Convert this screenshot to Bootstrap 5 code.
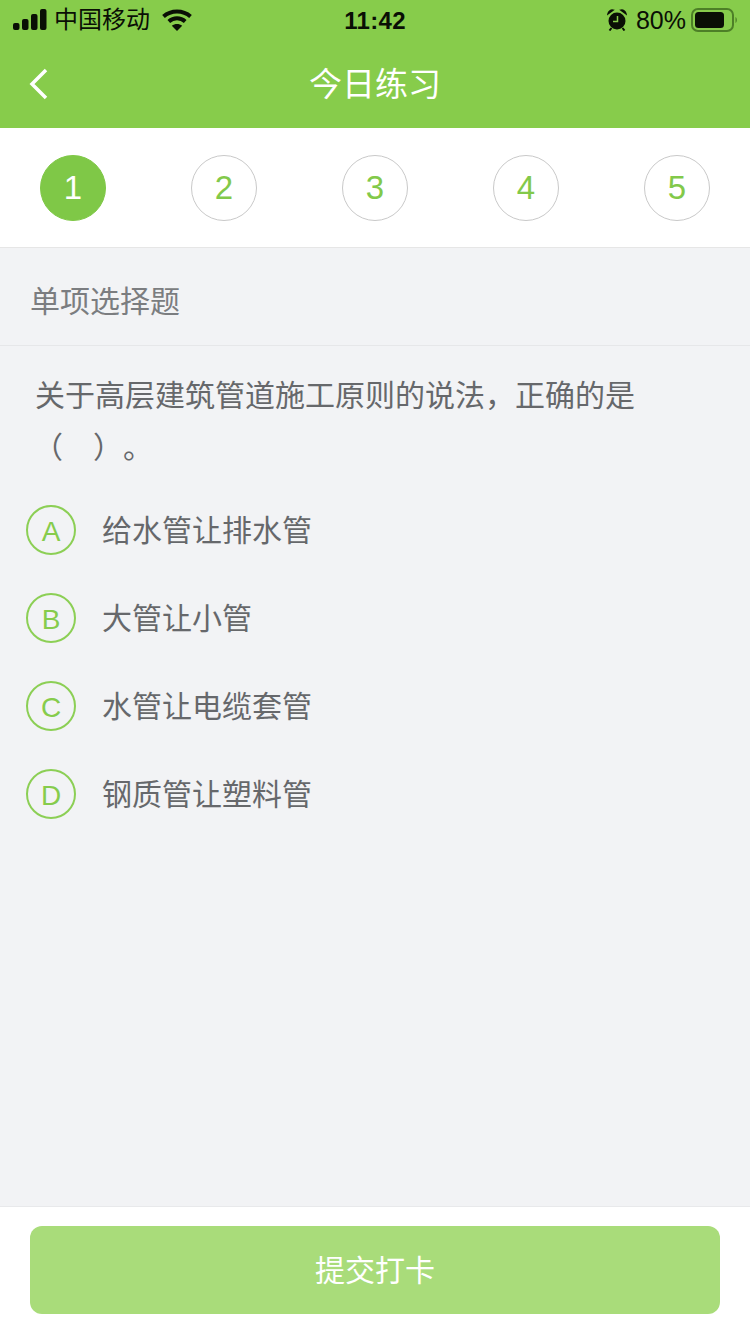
<!DOCTYPE html>
<html lang="zh">
<head>
<meta charset="utf-8">
<title>今日练习</title>
<link rel="stylesheet" href="https://cdn.jsdelivr.net/npm/bootstrap@5.3.0/dist/css/bootstrap.min.css">
<style>
html,body{margin:0;height:1334px;overflow:hidden}
body{font-family:"Liberation Sans","Noto Sans CJK SC",sans-serif;background:#f2f3f5}
.screen{height:1334px}
.topbar{background:#87cc4b;height:128px}
.statusline{height:40px;padding:0 12px 0 13px;color:#0a0f05;font-size:26px;line-height:40px}
.statusline svg{display:block}
.carrier{margin-left:7px;margin-right:12px;font-size:24px}
.clock{left:0;right:0;top:1px;text-align:center;font-weight:700;font-size:24px;letter-spacing:.3px}
.pct{font-size:25px;margin:0 5px 0 9px}
.titleline{height:88px;color:#fff}
.titletext{font-size:33px;line-height:90px}
.backbtn{left:29px;top:28px}
.stepper{height:120px;padding:0 40px;border-bottom:1px solid #e6e6e6;background:#fff}
.stepdot{width:66px;height:66px;font-size:33px;color:#82c94a;border:1px solid #c9c9c9;background:#fff}
.stepdot.on{background:#7fc847;border-color:#7fc847;color:#fff}
.secthead{height:98px;padding-left:30px;padding-top:9px;color:#7b7d80;font-size:30px;border-bottom:1px solid #e6e7e9}
.question{margin:24px 110px 0 35px;font-size:30px;line-height:52px;color:#66686b;text-spacing-trim:space-all;font-feature-settings:"palt" 0}
.blank{margin-left:-2px}
.optlist{padding:12px 0 0 26px}
.optrow{height:88px;color:#66686b;font-size:30px}
.optmark{width:50px;height:50px;border:2px solid #8ccf55;color:#86cc4c;font-size:28px;margin-right:26px;padding-top:3px}
.footbar{height:128px;background:#fff;border-top:1px solid #e8e9eb;padding:19px 30px 0}
.submit{width:100%;height:88px;background:#a9dc7a;border:0;border-radius:12px;color:#fff;font-size:30px;letter-spacing:0}
.submit:disabled{background:#a9dc7a;color:#fff;opacity:1}
</style>
</head>
<body>
<div class="screen d-flex flex-column">
  <header class="topbar">
    <div class="statusline d-flex align-items-center position-relative">
      <svg width="34" height="22" viewBox="0 0 34 22" aria-hidden="true" fill="#0a0f05"><rect x="0" y="14" width="6.500" height="7" rx="2"/><rect x="9" y="10" width="6.500" height="11" rx="2"/><rect x="18" y="5" width="6.500" height="16" rx="2"/><rect x="27" y="0" width="6.500" height="21" rx="2"/></svg>
      <span class="carrier">中国移动</span>
      <svg width="30" height="22" viewBox="0 0 30 22" aria-hidden="true" fill="none" stroke="#0a0f05" stroke-width="4"><path d="M1.500 7.500C9 .8 21 .8 28.500 7.500"/><path d="M6.800 12.500C11.500 8.300 18.500 8.300 23.200 12.500"/><path d="M15 22 9.800 16.800C12.800 14.400 17.200 14.400 20.200 16.800Z" fill="#0a0f05" stroke="none"/></svg>
      <span class="clock position-absolute">11:42</span>
      <span class="ms-auto d-flex align-items-center">
        <svg width="20" height="22" viewBox="0 0 20 22" aria-hidden="true"><circle cx="10" cy="12" r="8.500" fill="#0a0f05"/><path d="M10.500 7v5.500H6" fill="none" stroke="#87cc4b" stroke-width="1.500"/><path d="M1 4.800C1.500 2 4 .8 6 1.200ZM19 4.800C18.500 2 16 .8 14 1.200Z" fill="#0a0f05" stroke="#0a0f05" stroke-width="1.500"/><path d="M4.500 19 2.500 21.500M15.500 19 17.500 21.500" stroke="#0a0f05" stroke-width="2" fill="none"/></svg>
        <span class="pct">80%</span>
        <svg width="47" height="24" viewBox="0 0 47 24" aria-hidden="true"><rect x="1" y="1" width="41" height="22" rx="6" fill="none" stroke="#4d7f27" stroke-width="2"/><rect x="4" y="4" width="29" height="16" rx="3.500" fill="#0a0f05"/><path d="M44.500 9c1.800.8 1.800 5.200 0 6Z" fill="#4d7f27"/></svg>
      </span>
    </div>
    <div class="titleline position-relative text-center">
      <svg class="backbtn position-absolute" width="20" height="32" viewBox="0 0 20 32" aria-hidden="true"><path d="M17 2 3 16l14 14" fill="none" stroke="#fff" stroke-width="3.500"/></svg>
      <span class="titletext">今日练习</span>
    </div>
  </header>
  <nav class="stepper d-flex justify-content-between align-items-center">
    <div class="stepdot on rounded-circle d-flex align-items-center justify-content-center">1</div>
    <div class="stepdot rounded-circle d-flex align-items-center justify-content-center">2</div>
    <div class="stepdot rounded-circle d-flex align-items-center justify-content-center">3</div>
    <div class="stepdot rounded-circle d-flex align-items-center justify-content-center">4</div>
    <div class="stepdot rounded-circle d-flex align-items-center justify-content-center">5</div>
  </nav>
  <main class="flex-grow-1">
    <div class="secthead d-flex align-items-center">单项选择题</div>
    <p class="question mb-0">关于高层建筑管道施工原则的说法，正确的是<span class="blank">（　）。</span></p>
    <div class="optlist">
      <div class="optrow d-flex align-items-center"><span class="optmark rounded-circle d-flex align-items-center justify-content-center">A</span>给水管让排水管</div>
      <div class="optrow d-flex align-items-center"><span class="optmark rounded-circle d-flex align-items-center justify-content-center">B</span>大管让小管</div>
      <div class="optrow d-flex align-items-center"><span class="optmark rounded-circle d-flex align-items-center justify-content-center">C</span>水管让电缆套管</div>
      <div class="optrow d-flex align-items-center"><span class="optmark rounded-circle d-flex align-items-center justify-content-center">D</span>钢质管让塑料管</div>
    </div>
  </main>
  <footer class="footbar">
    <button class="btn submit" type="button" disabled>提交打卡</button>
  </footer>
</div>
<script src="https://cdn.jsdelivr.net/npm/bootstrap@5.3.0/dist/js/bootstrap.bundle.min.js"></script>
</body>
</html>
